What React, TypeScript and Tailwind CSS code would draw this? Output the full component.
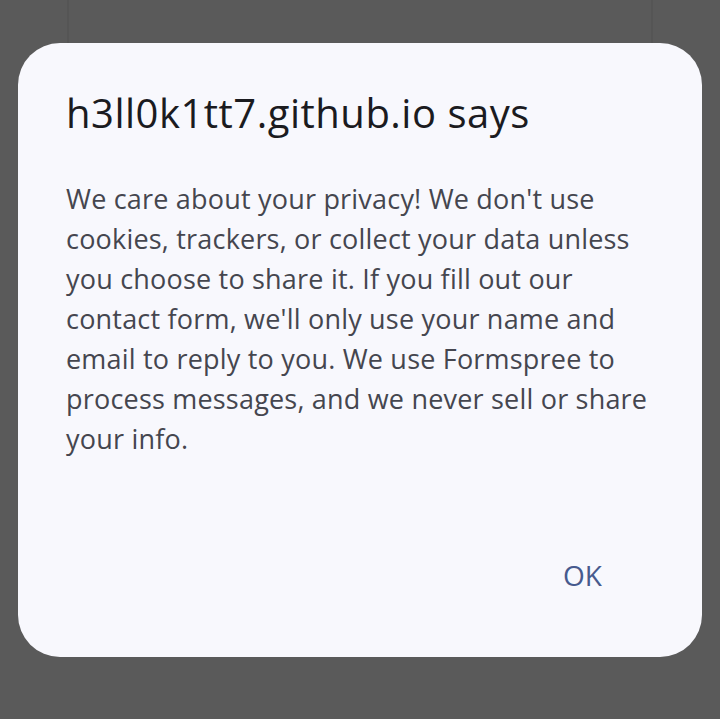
import React from 'react';

const lines = [
  "We care about your privacy! We don't use",
  'cookies, trackers, or collect your data unless',
  "you choose to share it. If you fill out our",
  "contact form, we'll only use your name and",
  'email to reply to you. We use Formspree to',
  'process messages, and we never sell or share',
  'your info.',
];

const App: React.FC = () => {
  return (
    <div className="relative w-[720px] h-[719px] overflow-hidden bg-[#5a5a5a]" style={{ fontFamily: '"Open Sans", Roboto, sans-serif' }}>
      {/* page behind the dialog */}
      <div className="flex justify-center">
        <div className="w-[586px] h-[200px] border-x-2 border-[#555555] bg-[#5a5a5a]" />
      </div>

      {/* dialog */}
      <div className="absolute left-[18px] top-[43px] w-[684px] h-[614px] rounded-[42px] bg-[#f8f8fd] flex flex-col pl-[48px] pr-[48px] pt-[46px]">
        <h2 className="text-[40px] leading-[48px] text-[#1b1b1f] font-normal whitespace-nowrap tracking-[0.5px]">
          h3ll0k1tt7.github.io says
        </h2>
        <div className="mt-[42px] text-[27px] leading-[40px] text-[#45464f] tracking-[0.2px]">
          {lines.map((l, i) => (
            <div key={i} className="whitespace-nowrap">{l}</div>
          ))}
        </div>
        <div className="flex-1" />
        <div className="flex justify-end pr-[52px] pb-[62px]">
          <button className="text-[28px] leading-[40px] text-[#475a8e] font-normal">OK</button>
        </div>
      </div>
    </div>
  );
};

export default App;
